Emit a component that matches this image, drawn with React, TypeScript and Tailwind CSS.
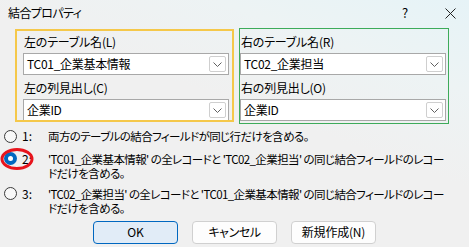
function Chevron() {
  return (
    <svg width="9" height="5" viewBox="0 0 9 5">
      <path d="M0.5 0.5 L4.5 4.5 L8.5 0.5" fill="none" stroke="#606060" strokeWidth="1" />
    </svg>
  )
}

function Combo({ value }: { value: string }) {
  return (
    <div className="flex h-[22px] items-center border border-[#a8a8a8] bg-white pl-[3px] pr-[2px]">
      <span className="flex-1 text-[12px] leading-none tracking-[-0.3px] text-black">{value}</span>
      <span className="flex h-[16px] w-[17px] items-center justify-center rounded-[2px] border border-[#cfcfcf]">
        <Chevron />
      </span>
    </div>
  )
}

function Field({ label, value }: { label: string; value: string }) {
  return (
    <div className="flex flex-col">
      <div className="h-[16px] pl-[1px] text-[12px] leading-[16px] tracking-[-0.2px]">{label}</div>
      <div className="mt-[3px]">
        <Combo value={value} />
      </div>
    </div>
  )
}

function Radio({ checked }: { checked?: boolean }) {
  if (checked) {
    return (
      <span className="flex h-[13px] w-[13px] shrink-0 items-center justify-center rounded-full bg-[#0067c0]">
        <span className="h-[5px] w-[5px] rounded-full bg-white" />
      </span>
    )
  }
  return <span className="h-[13px] w-[13px] shrink-0 rounded-full border border-[#3a3a3a] bg-[#f8f8f8]" />
}

function Option({ n, checked, first, second }: { n: string; checked?: boolean; first: string; second?: string }) {
  return (
    <div className="flex items-start pl-[4px]">
      <div className="flex h-[14px] shrink-0 items-center">
        <Radio checked={checked} />
      </div>
      <div className="ml-[5px] w-[26px] shrink-0 text-[12px] leading-[14px]">{n}</div>
      <div className="whitespace-nowrap text-[11.5px] leading-[14.5px] tracking-[-0.6px]">
        {first}
        {second && <br />}
        {second}
      </div>
    </div>
  )
}

export default function App() {
  return (
    <div className='relative h-[247px] w-[469px] overflow-hidden bg-[#f0f0f0] bg-[linear-gradient(200deg,#e6f3f7_0%,#edf3f4_22%,#f0f0f0_45%)] font-["Noto_Sans_CJK_JP",sans-serif] text-black [font-feature-settings:"palt"]'>
      {/* title bar */}
      <div className="flex h-[26px] items-center pl-[8px]">
        <span className="flex-1 text-[12px] tracking-[-0.6px]">結合プロパティ</span>
        <span className="w-[20px] text-center text-[13px]">?</span>
        <span className="ml-[25px] mr-[9px] flex w-[20px] items-center justify-center">
          <svg width="11" height="11" viewBox="0 0 11 11">
            <path d="M0.5 0.5 L10.5 10.5 M10.5 0.5 L0.5 10.5" stroke="#222" strokeWidth="1" />
          </svg>
        </span>
      </div>

      {/* table / column pickers */}
      <div className="mt-[8px] grid grid-cols-[206px_206px] gap-x-[11px] pl-[23px]">
        <div className="flex flex-col gap-[5px]">
          <Field label="左のテーブル名(L)" value="TC01_企業基本情報" />
          <Field label="左の列見出し(C)" value="企業ID" />
        </div>
        <div className="flex flex-col gap-[5px]">
          <Field label="右のテーブル名(R)" value="TC02_企業担当" />
          <Field label="右の列見出し(O)" value="企業ID" />
        </div>
      </div>

      {/* join type options */}
      <div className="mt-[8px] flex flex-col">
        <Option n="1:" first="両方のテーブルの結合フィールドが同じ行だけを含める。" />
        <div className="mt-[8px]">
          <Option
            n="2:"
            checked
            first="'TC01_企業基本情報' の全レコードと 'TC02_企業担当' の同じ結合フィールドのレコー"
            second="ドだけを含める。"
          />
        </div>
        <div className="mt-[6px]">
          <Option
            n="3:"
            first="'TC02_企業担当' の全レコードと 'TC01_企業基本情報' の同じ結合フィールドのレコー"
            second="ドだけを含める。"
          />
        </div>
      </div>

      {/* buttons */}
      <div className="mt-[5px] flex gap-[14px] pl-[93px]">
        <button className="h-[23px] w-[85px] rounded-[4px] border border-[#0067c0] bg-[#e1ecf7] text-[12px]">OK</button>
        <button className="h-[23px] w-[85px] rounded-[4px] border border-[#d0d0d0] bg-[#fdfdfd] text-[12px] tracking-[-0.4px]">キャンセル</button>
        <button className="h-[23px] w-[85px] rounded-[4px] border border-[#d0d0d0] bg-[#fdfdfd] text-[12px] tracking-[-0.2px]">新規作成(N)</button>
      </div>

      {/* annotation overlays */}
      <div className="pointer-events-none absolute left-[15px] top-[29px] h-[93px] w-[219px] border-2 border-[#f5c84a]" />
      <div className="pointer-events-none absolute left-[239px] top-[28px] h-[96px] w-[210px] border-[1.5px] border-[#3dab5a]" />
      <svg className="pointer-events-none absolute left-[0px] top-[147px]" width="34" height="24" viewBox="0 0 34 24">
        <ellipse cx="17" cy="12" rx="15" ry="9.5" fill="none" stroke="#e8141c" strokeWidth="3" />
      </svg>
    </div>
  )
}
